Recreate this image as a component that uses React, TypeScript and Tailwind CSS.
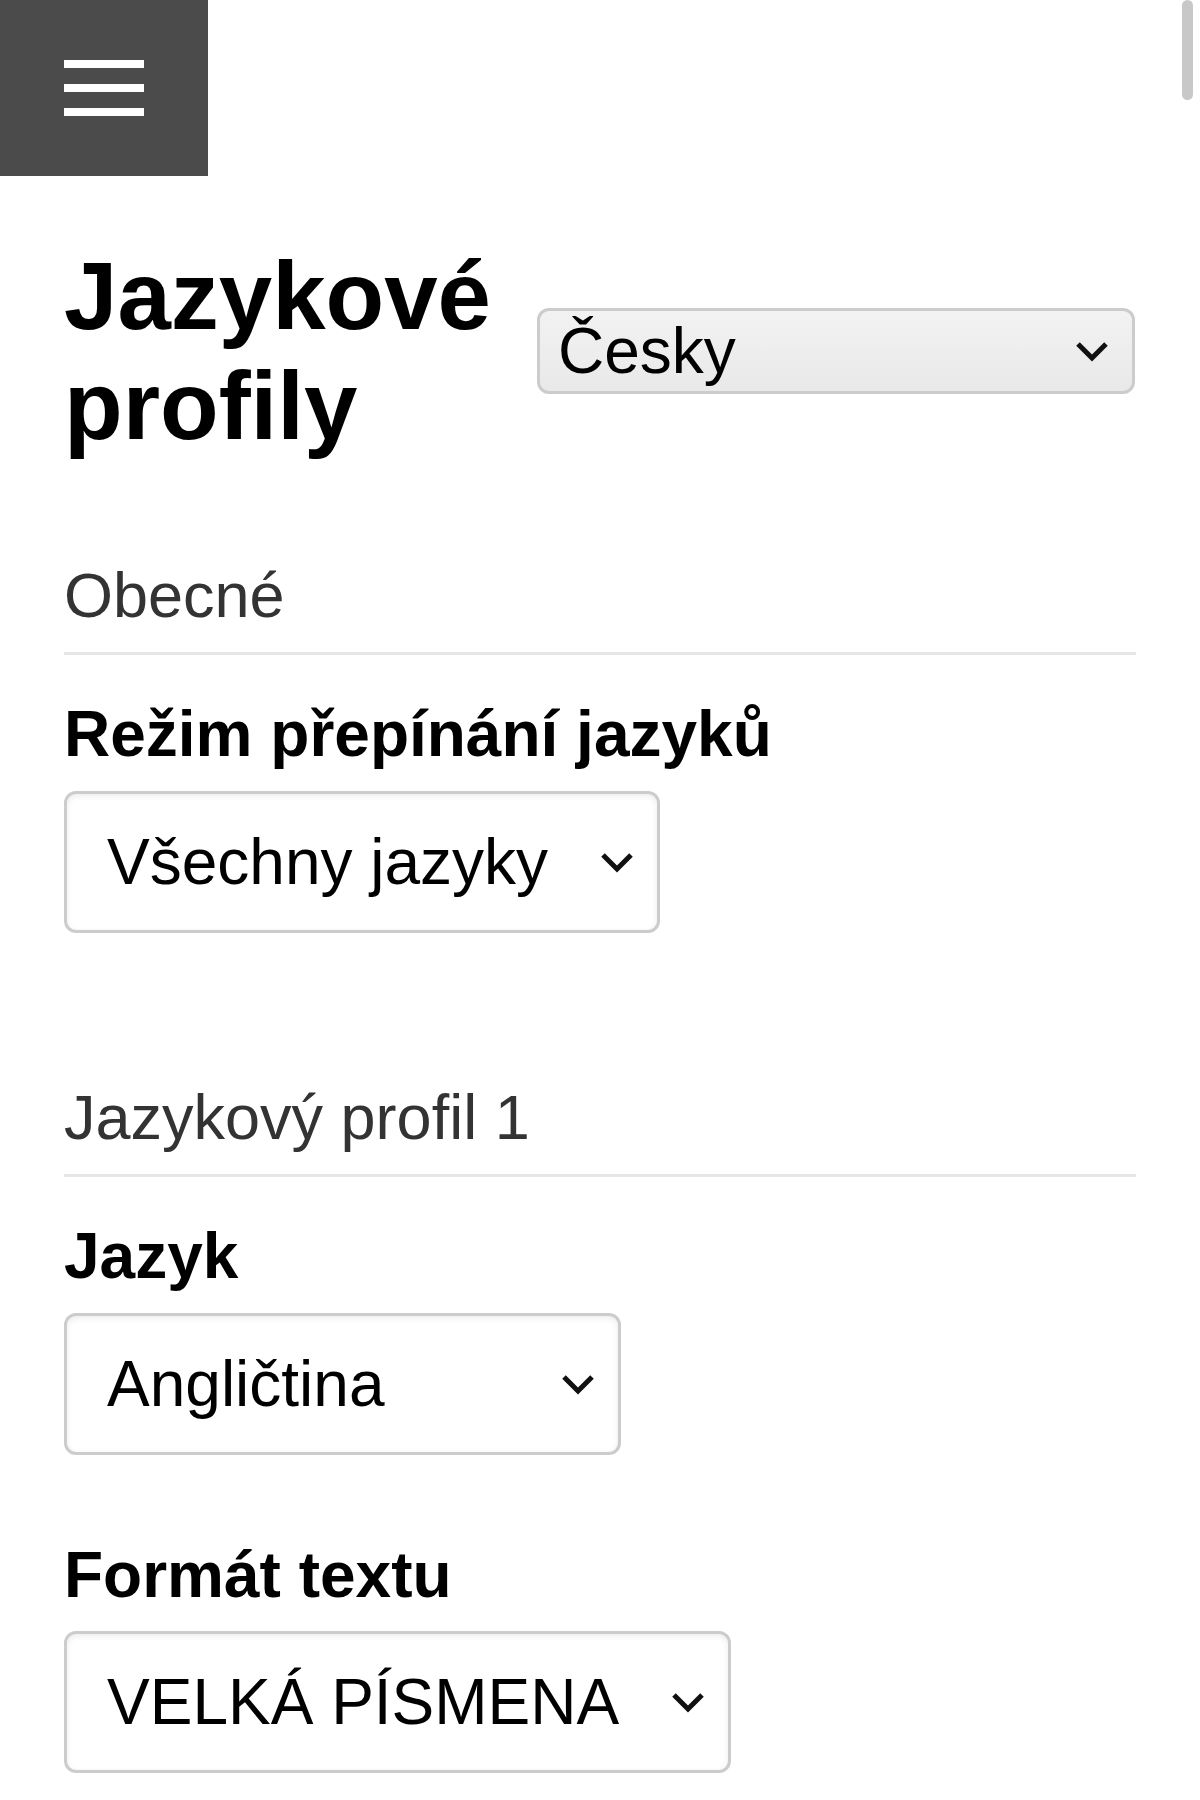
import React from "react";

function Chevron() {
  return (
    <svg
      className="absolute right-[23px] top-1/2 -translate-y-1/2"
      width="34"
      height="22"
      viewBox="0 0 34 22"
      fill="none"
    >
      <polyline
        points="3,4 17,18 31,4"
        stroke="#111"
        strokeWidth="5"
        strokeLinecap="butt"
        strokeLinejoin="miter"
      />
    </svg>
  );
}

function FakeSelect({
  value,
  className,
}: {
  value: string;
  className: string;
}) {
  return (
    <div
      role="combobox"
      className={
        "relative flex h-[142px] items-center rounded-[12px] border-[3px] border-[#cccccc] bg-white pl-[40px] text-[64px] leading-[74px] text-black shadow-[inset_0_2px_6px_rgba(0,0,0,0.08)] " +
        className
      }
    >
      <span>{value}</span>
      <Chevron />
    </div>
  );
}

export default function App() {
  return (
    <div className="relative min-h-[1800px] w-full bg-white font-['Liberation_Sans',Arial,sans-serif] text-black">
      {/* scrollbar thumb */}
      <div className="absolute right-[7px] top-0 h-[100px] w-[11px] rounded-full bg-[#c8c8c8]" />

      {/* menu button */}
      <div className="flex h-[176px] w-[208px] flex-col justify-center gap-[16px] bg-[#4b4b4b] pl-[64px]">
        <div className="h-[8px] w-[80px] bg-white" />
        <div className="h-[8px] w-[80px] bg-white" />
        <div className="h-[8px] w-[80px] bg-white" />
      </div>

      <div className="px-[64px]">
        {/* title row */}
        <div className="mt-[65px] flex items-center">
          <h1 className="w-[473px] shrink-0 text-[96px] font-bold leading-[110px]">
            Jazykové profily
          </h1>
          <div
            role="combobox"
            className="relative flex h-[86px] w-[598px] items-center rounded-[12px] border-[3px] border-[#cccccc] bg-gradient-to-b from-[#f2f2f2] to-[#e9e9e9] pl-[18px] text-[64px] leading-[74px] text-black"
          >
            <span>Česky</span>
            <Chevron />
          </div>
        </div>

        {/* Obecné */}
        <h2 className="mt-[98px] text-[63px] font-normal leading-[72px] text-[#333333]">
          Obecné
        </h2>
        <div className="mt-[21px] h-[3px] w-full bg-[#e6e6e6]" />

        <div className="mt-[42px] text-[64px] font-bold leading-[74px]">
          Režim přepínání jazyků
        </div>
        <FakeSelect value="Všechny jazyky" className="mt-[20px] w-[596px]" />

        {/* Jazykový profil 1 */}
        <h2 className="mt-[148px] text-[63px] font-normal leading-[72px] text-[#333333]">
          Jazykový profil 1
        </h2>
        <div className="mt-[21px] h-[3px] w-full bg-[#e6e6e6]" />

        <div className="mt-[42px] text-[64px] font-bold leading-[74px]">
          Jazyk
        </div>
        <FakeSelect value="Angličtina" className="mt-[20px] w-[557px]" />

        <div className="mt-[83px] text-[64px] font-bold leading-[74px]">
          Formát textu
        </div>
        <FakeSelect value="VELKÁ PÍSMENA" className="mt-[19px] w-[667px]" />
      </div>
    </div>
  );
}
